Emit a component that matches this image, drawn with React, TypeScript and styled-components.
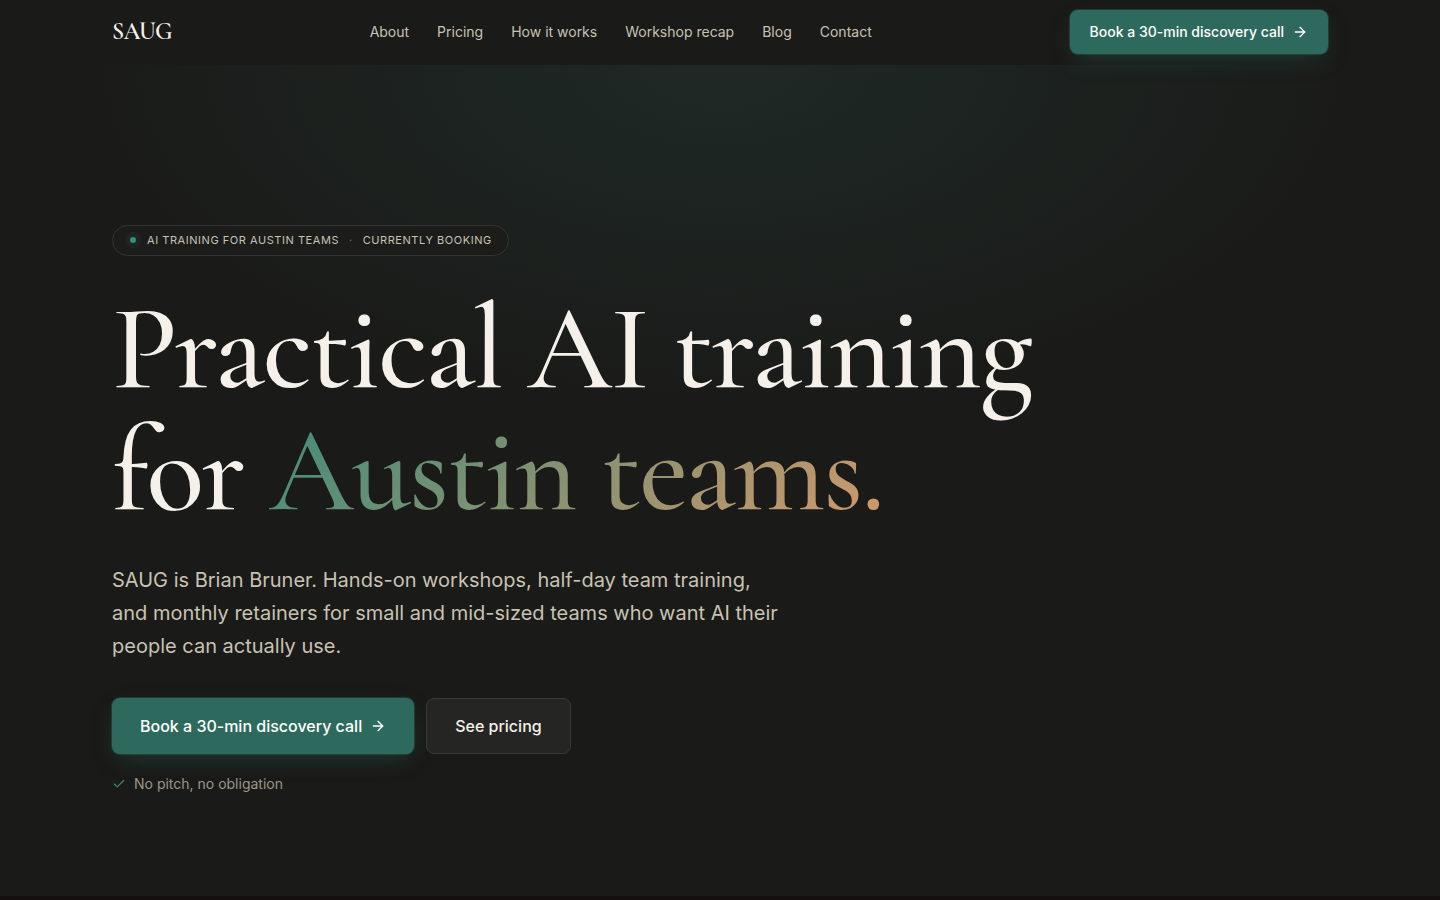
import React from "react";
import styled, { createGlobalStyle, css } from "styled-components";
import { ArrowRight, Check } from "lucide-react";

const GlobalStyle = createGlobalStyle`
  *, *::before, *::after { box-sizing: border-box; }
  body {
    margin: 0;
    background: #1a1a18;
    color: #f5f1ea;
    font-family: Inter, "Liberation Sans", sans-serif;
    -webkit-font-smoothing: antialiased;
  }
`;

const Container = styled.div`
  width: 100%;
  max-width: 1280px;
  margin: 0 auto;
  padding: 0 32px;
`;

const Header = styled.header`
  position: relative;
  z-index: 1;
  border-bottom: 1px solid transparent;
`;

const HeaderRow = styled(Container)`
  display: flex;
  align-items: center;
  justify-content: space-between;
  height: 64px;
`;

const Logo = styled.a`
  color: #f5f1ea;
  font-family: "Cormorant Garamond", "Liberation Serif", serif;
  font-size: 24px;
  font-weight: 600;
  letter-spacing: -0.03em;
  line-height: 32px;
  text-decoration: none;
`;

const Nav = styled.nav`
  display: flex;
  flex-wrap: wrap;
  gap: 0 28px;
`;

const NavLink = styled.a`
  color: #c8c2b4;
  font-size: 14px;
  line-height: 20px;
  text-decoration: none;
`;

const Button = styled.button<{ $variant?: "primary" | "secondary"; $size?: "md" | "lg" }>`
  display: inline-flex;
  align-items: center;
  justify-content: center;
  gap: 8px;
  border: 0;
  border-radius: 8px;
  font-family: inherit;
  font-weight: 500;
  white-space: nowrap;
  cursor: pointer;
  ${({ $size }) =>
    $size === "lg"
      ? css`
          height: 56px;
          padding: 0 28px;
          font-size: 16px;
          line-height: 24px;
        `
      : css`
          height: 44px;
          padding: 0 20px;
          font-size: 14px;
          line-height: 20px;
        `}
  ${({ $variant }) =>
    $variant === "secondary"
      ? css`
          border: 1px solid #3a3936;
          background: #252523;
          color: #f5f1ea;
        `
      : css`
          background: #2d6a5d;
          color: #ffffff;
          box-shadow: 0 0 0 1px rgba(45, 106, 93, 0.4), 0 8px 24px -6px rgba(45, 106, 93, 0.45);
        `}
`;

const Hero = styled.section`
  padding: 160px 0 102px;
  background: radial-gradient(ellipse 680px 360px at 50% 0, #1e2926, #1a1a18);
`;

const Badge = styled.p`
  display: flex;
  align-items: center;
  width: fit-content;
  margin: 0;
  padding: 6px 16px 7px;
  border: 1px solid #343431;
  border-radius: 16px;
  background: #1c1c1a;
  color: #c8c2b4;
  font-size: 11px;
  letter-spacing: 0.05em;
  line-height: 16px;
  text-transform: uppercase;
`;

const Dot = styled.span`
  width: 6px;
  height: 6px;
  margin: 0 11px 0 1px;
  border-radius: 50%;
  background: #3d8b7a;
  box-shadow: 0 0 0 5px rgba(61, 139, 122, 0.08);
`;

const Separator = styled.span`
  margin: 0 10px;
  color: #6f6b62;
`;

const Title = styled.h1`
  margin: 32px 0 0;
  font-family: "Cormorant Garamond", "Liberation Serif", serif;
  font-size: 120px;
  font-weight: 500;
  letter-spacing: -0.02em;
  line-height: 122px;
`;

const Accent = styled.span`
  background: linear-gradient(135deg, #3d8b7a 0%, #d4996a 100%);
  background-clip: text;
  -webkit-background-clip: text;
  color: transparent;
`;

const Lead = styled.p`
  max-width: 672px;
  margin: 32px 0 0;
  color: #c8c2b4;
  font-size: 20px;
  line-height: 33px;
`;

const Actions = styled.div`
  display: flex;
  flex-wrap: wrap;
  gap: 12px;
  margin-top: 35px;
`;

const Note = styled.p`
  display: flex;
  align-items: center;
  gap: 8px;
  margin: 20px 0 0;
  color: #9c968a;
  font-size: 14px;
  line-height: 20px;

  svg {
    color: #3d8b7a;
  }
`;

const NextSection = styled.div`
  height: 64px;
  background: #15100f;
`;

const links = ["About", "Pricing", "How it works", "Workshop recap", "Blog", "Contact"];

export default function App() {
  return (
    <>
      <GlobalStyle />
      <Header>
        <HeaderRow>
          <Logo href="#home">SAUG</Logo>
          <Nav aria-label="Main">
            {links.map((label) => (
              <NavLink key={label} href={`#${label.toLowerCase().replace(/ /g, "-")}`}>
                {label}
              </NavLink>
            ))}
          </Nav>
          <Button type="button">
            Book a 30-min discovery call <ArrowRight size={16} aria-hidden />
          </Button>
        </HeaderRow>
      </Header>
      <main>
        <Hero>
          <Container>
            <Badge>
              <Dot />
              AI training for Austin teams
              <Separator>·</Separator>
              Currently booking
            </Badge>
            <Title>
              Practical AI training
              <br />
              for <Accent>Austin teams.</Accent>
            </Title>
            <Lead>
              SAUG is Brian Bruner. Hands-on workshops, half-day team training, and monthly
              retainers for small and mid-sized teams who want AI their people can actually use.
            </Lead>
            <Actions>
              <Button type="button" $size="lg">
                Book a 30-min discovery call <ArrowRight size={16} aria-hidden />
              </Button>
              <Button type="button" $size="lg" $variant="secondary">
                See pricing
              </Button>
            </Actions>
            <Note>
              <Check size={14} strokeWidth={2} aria-hidden />
              No pitch, no obligation
            </Note>
          </Container>
        </Hero>
        <NextSection />
      </main>
    </>
  );
}
